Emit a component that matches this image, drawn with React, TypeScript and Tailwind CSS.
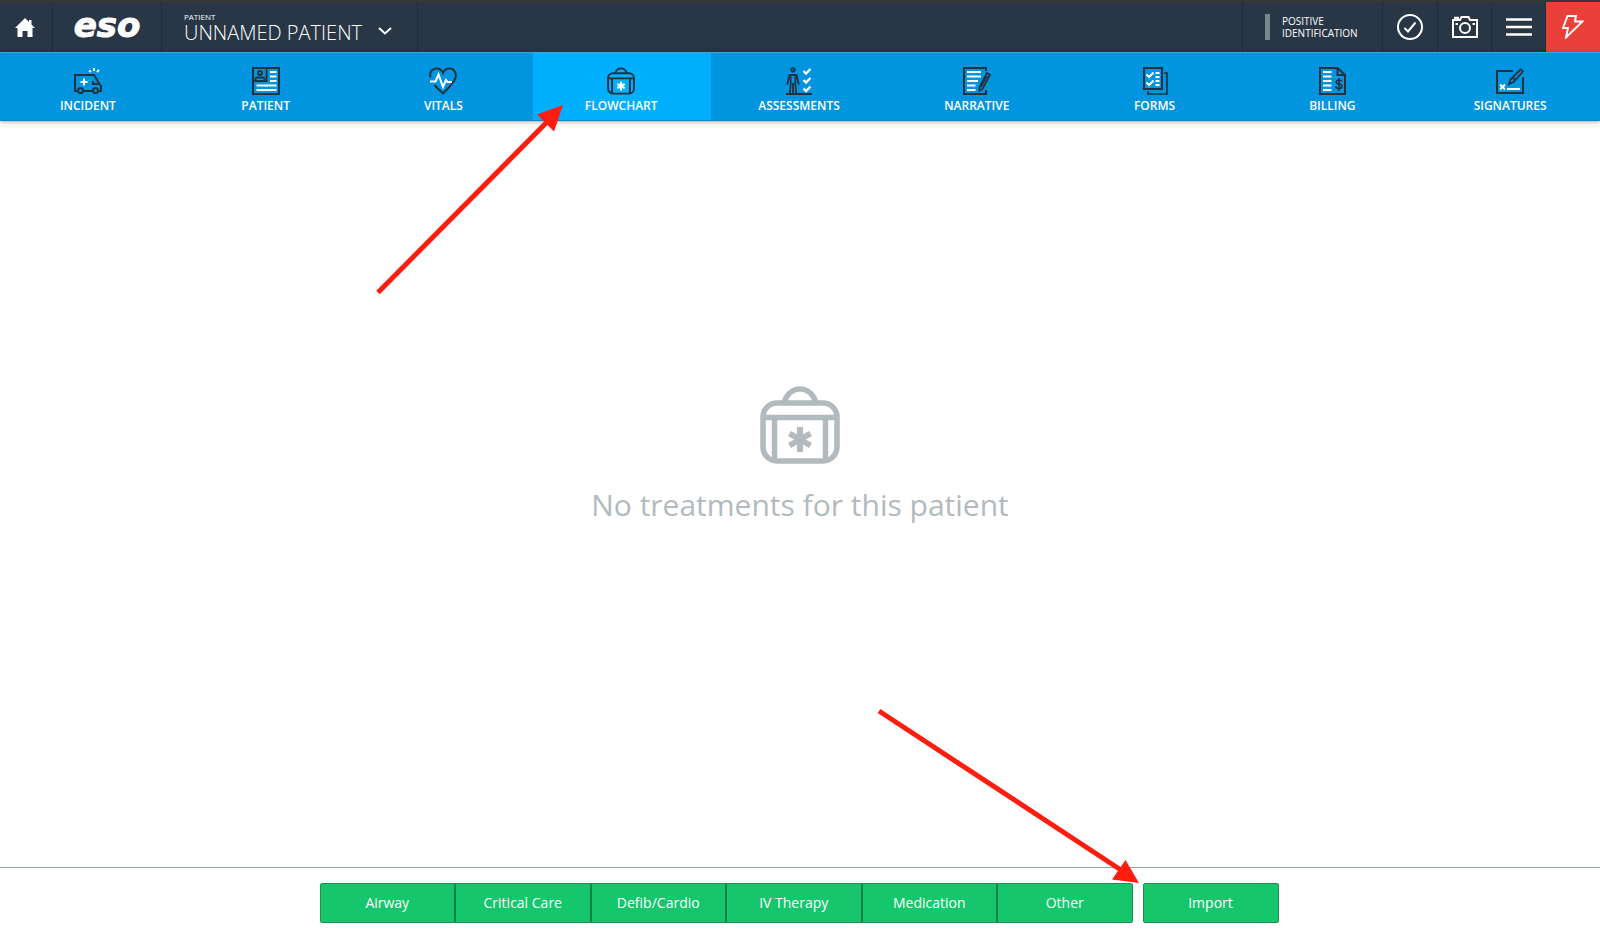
import type { ReactNode } from "react";

const DARK = "#22323f";

function Bag({ line, star, className, width }: { line: string; star: string; className: string; width: number }) {
  return (
    <svg viewBox="0 0 80 78" fill="none" className={className} aria-hidden="true">
      <g stroke={line} strokeWidth={width}>
        <path d="M24 17c2-8 8-14 16-14s14 6 16 14" />
        <rect x="3" y="17" width="74" height="58" rx="14" />
        <path d="M3 31.500h74M14.500 32v42M65.500 32v42" />
      </g>
      <path d="M40 41v25M29.500 47.500l21 12M50.500 47.500l-21 12" stroke={star} strokeWidth="6" />
    </svg>
  );
}

function Icon({ children }: { children: ReactNode }) {
  return (
    <svg viewBox="0 0 28 28" fill="none" stroke={DARK} strokeWidth="2" className="h-7 w-7" aria-hidden="true">
      {children}
    </svg>
  );
}

const tabs: { label: string; icon: ReactNode; active?: boolean }[] = [
  {
    label: "INCIDENT",
    icon: (
      <Icon>
        <path d="M3.500 24H1V8h19l5.500 9 1.500 2v5h-2.500M9.500 24h9.500" />
        <path d="M19 14v3h6" />
        <circle cx="6.500" cy="23.500" r="2.500" />
        <circle cx="21.500" cy="23.500" r="2.500" />
        <path d="M10 11.500v7M6.500 15h7M15 3.500l2 1.500M20 1v3M25 3l-2 2" stroke="#fff" />
      </Icon>
    ),
  },
  {
    label: "PATIENT",
    icon: (
      <Icon>
        <rect x="1" y="1" width="26" height="26" />
        <path d="M14.500 1v13H2" />
        <circle cx="8" cy="6" r="2" />
        <path d="M3.500 13v-1.500a2 2 0 0 1 2-1h5a2 2 0 0 1 2 1V13" />
        <path d="M18 5h6.500M18 9.500h6.500M18 14h6.500M4.500 18.500h20M4.500 23h20" stroke="#fff" />
      </Icon>
    ),
  },
  {
    label: "VITALS",
    icon: (
      <Icon>
        <path d="M1.500 10.500C0 5 3.500 1.500 7.500 1.500c3 0 5.500 2 6.500 4.500 1-2.500 3.500-4.500 6.500-4.500 4.500 0 7.500 4.500 6 9.500-1.500 5-7.500 10.500-12.500 15.500-3-3-6-5.500-8.500-8.500" />
        <path d="M1 14.500h5.500L9.500 7.500 14 20l3-7 1.500 2H23" stroke="#fff" />
      </Icon>
    ),
  },
  {
    label: "FLOWCHART",
    active: true,
    icon: <Bag line={DARK} star="#fff" className="h-7 w-7" width={5.5} />,
  },
  {
    label: "ASSESSMENTS",
    icon: (
      <Icon>
        <path d="M1 27h26" />
        <circle cx="8" cy="2.800" r="1.700" strokeWidth="1.800" />
        <path d="M2.200 17.500L4.500 8h7l2.300 9.500M5.700 9.500v7.500l-1 10M10.300 9.500v7.500l1 10M8 16v11" strokeWidth="1.800" />
        <path d="M18.500 4l2.500 2.500L25.500 2M18.500 13l2.500 2.500 4.500-4.500M18.500 21.500l2.500 2.500 4.500-4.500" stroke="#fff" strokeWidth="2.300" />
      </Icon>
    ),
  },
  {
    label: "NARRATIVE",
    icon: (
      <Icon>
        <path d="M23 4V1H1v26h22v-4" />
        <path d="M24.500 6.500l2.500 1.500-7.500 14-3 2v-4l7.500-14zM18 20l6-11" strokeWidth="1.700" />
        <path d="M4 5h14M4 9.500h14M4 14h11M4 18.500h8.500M4 23h8.500" stroke="#fff" />
      </Icon>
    ),
  },
  {
    label: "FORMS",
    icon: (
      <Icon>
        <rect x="3" y="1" width="18" height="21" />
        <path d="M23 6h3v21H7v-3" strokeWidth="1.700" />
        <path d="M5.500 7.500L8 10l4.500-4.500M5.500 15.500L8 18l4.500-4.500M14.500 6h4M14.500 10h4M14.500 14h4M14.500 18h4" stroke="#fff" />
      </Icon>
    ),
  },
  {
    label: "BILLING",
    icon: (
      <Icon>
        <path d="M2 1h17.500L27 8v19H2zM19.500 1v7H27" />
        <path d="M24 14.500c-.5-1-1.500-1.500-3-1.500-3.500 0-3.500 3.800 0 4 4 .3 4 4.500 0 4.500-1.700 0-3-.6-3.500-2M21 11v13" strokeWidth="1.600" />
        <path d="M5 5h8.500M5 9.500h8.500M5 14h8.500M5 18.500h8.500M5 23h8.500" stroke="#fff" />
      </Icon>
    ),
  },
  {
    label: "SIGNATURES",
    icon: (
      <Icon>
        <path d="M17 4H1v22h26V10" />
        <path d="M24.500 2.500l2.500 2-9.500 10.500-4.500 2 1.500-4.500zM16 10l4 3.500" strokeWidth="1.800" />
        <path d="M4 17.500l5 5M9 17.500l-5 5M11 22h13" stroke="#fff" />
      </Icon>
    ),
  },
];

const treatments = [
  { label: "Airway", strong: true },
  { label: "Critical Care", strong: false },
  { label: "Defib/Cardio", strong: true },
  { label: "IV Therapy", strong: false },
  { label: "Medication", strong: true },
  { label: "Other", strong: false },
];

export default function App() {
  return (
    <div className="flex min-h-screen flex-col bg-white font-['Open_Sans','Noto_Sans',sans-serif]">
      <header className="flex h-[52px] border-t-2 border-[#363636] bg-[#283646] text-white">
        <button aria-label="Home" className="flex w-[53px] items-center justify-center border-r border-[#202c39] pr-0.5">
          <svg viewBox="0 0 20 19" className="w-5" fill="#fff" aria-hidden="true">
            <path d="M10 0l4 4V2h2.500v4.500L20 10h-2.500v9h-5v-6h-5v6h-5v-9H0z" />
          </svg>
        </button>
        <a href="#eso" className="flex w-[109px] items-center justify-center border-r border-[#202c39] pb-1 font-['DejaVu_Sans',sans-serif] text-[34px] leading-none font-bold italic [-webkit-text-stroke:1px_#fff]">
          eso
        </a>
        <button className="flex w-64 items-center gap-4 border-r border-[#202c39] pt-0.5 pl-[22px] text-left">
          <span className="flex flex-col">
            <span className="text-[8px] leading-[10px]">PATIENT</span>
            <span className="text-xl leading-[22px] font-light">UNNAMED PATIENT</span>
          </span>
          <svg viewBox="0 0 14 8" className="mt-1.5 w-3.5" fill="none" stroke="#fff" strokeWidth="2" aria-hidden="true">
            <path d="M1 1l6 5.500L13 1" />
          </svg>
        </button>
        <div className="ml-auto flex">
          <button className="flex w-[141px] items-center gap-3 border-x border-[#202c39] pl-[22px] text-left text-[10px] leading-3">
            <span className="h-[26px] w-[5px] bg-[#75878a]" />
            <span>
              POSITIVE
              <br />
              IDENTIFICATION
            </span>
          </button>
          <button aria-label="Validate" className="flex w-[55px] items-center justify-center border-r border-[#202c39]">
            <svg viewBox="0 0 26 26" className="w-[26px]" fill="none" stroke="#fff" strokeWidth="2" aria-hidden="true">
              <circle cx="13" cy="13" r="12" />
              <path d="M7.500 14l3.500 3.500L18.500 8.500" />
            </svg>
          </button>
          <button aria-label="Camera" className="flex w-[54px] items-center justify-center border-r border-[#202c39]">
            <svg viewBox="0 0 26 22" className="w-[26px]" fill="none" stroke="#fff" strokeWidth="2" aria-hidden="true">
              <path d="M1 4h7l1.500-3h7L18 4h7v17H1zM3 4V1.800h3V4" />
              <circle cx="13" cy="12" r="5" />
              <path d="M3.500 8h2.500M20.500 8h2.500" />
            </svg>
          </button>
          <button aria-label="Menu" className="flex w-[54px] items-center justify-center border-r border-[#202c39]">
            <svg viewBox="0 0 26 18" className="w-[26px]" stroke="#fff" strokeWidth="2.500" aria-hidden="true">
              <path d="M0 1.500h26M0 9h26M0 16.500h26" />
            </svg>
          </button>
          <button aria-label="Quick actions" className="flex w-[54px] items-center justify-center bg-[#e94039]">
            <svg viewBox="0 0 22 24" className="w-[22px]" fill="none" stroke="#fff" strokeWidth="1.900" aria-hidden="true">
              <path d="M5.500 1h8.500l-1 5.500h7.500L4 22.500l2-9.500H1z" />
            </svg>
          </button>
        </div>
      </header>

      <nav className="grid h-[69px] grid-cols-9 border-t border-b border-t-[#35a9e3] border-b-[#1580bd] bg-[#0295df] shadow-[0_1px_4px_rgba(0,0,0,0.35)]">
        {tabs.map((t) => (
          <a
            key={t.label}
            href={"#" + t.label.toLowerCase()}
            className={"relative flex flex-col items-center pt-3.5 pr-0.5 text-xs leading-[22px] font-semibold text-white " + (t.active ? "bg-[#00b0ff]" : "")}
          >
            {t.icon}
            {t.label}
            {t.active && (
              <svg viewBox="0 0 188 190" className="absolute top-[52px] right-[147px] z-10 w-[188px]" aria-hidden="true">
                <path d="M2 187.500L173 15" stroke="#ff1d10" strokeWidth="5" />
                <path d="M187 0l-26 9.500L178 26.500z" fill="#ff1d10" />
              </svg>
            )}
          </a>
        ))}
      </nav>

      <main className="flex flex-1 flex-col items-center justify-center gap-5 pb-[76px] text-[#b2babd]">
        <Bag line="#b2babd" star="#b2babd" className="w-20" width={5.5} />
        <p className="text-[30px] leading-[42px]">No treatments for this patient</p>
      </main>

      <footer className="flex justify-center gap-2.5 border-t border-[#95a5a6] pt-[15px] pr-0.5 pb-1.5 text-sm text-white">
        <div className="flex h-10 w-[813px] divide-x-2 divide-[#128347] overflow-hidden rounded-xs border border-[#278b50] bg-[#16c66c]">
          {treatments.map((t) => (
            <button key={t.label} className={"flex-1 basis-0 " + (t.strong ? "font-medium" : "")}>
              {t.label}
            </button>
          ))}
        </div>
        <div className="relative">
          <button className="h-10 w-[136px] rounded-xs border border-[#278b50] bg-[#16c66c] font-medium">Import</button>
          <svg viewBox="0 0 264 176" className="absolute right-[140px] bottom-10 w-[264px]" aria-hidden="true">
            <path d="M4 4L249 165" stroke="#ff1d10" strokeWidth="5" />
            <path d="M264 176l-27-3.500L250.500 153z" fill="#ff1d10" />
          </svg>
        </div>
      </footer>
    </div>
  );
}
